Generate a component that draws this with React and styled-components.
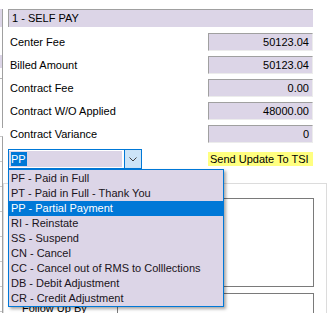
import React from 'react'
import styled, { createGlobalStyle } from 'styled-components'

const Global = createGlobalStyle`
  html, body { margin: 0; padding: 0; background: #fff; }
`

const lavender = '#dcd5e7'

const fields = [
  { label: 'Center Fee', value: '50123.04' },
  { label: 'Billed Amount', value: '50123.04' },
  { label: 'Contract Fee', value: '0.00' },
  { label: 'Contract W/O Applied', value: '48000.00' },
  { label: 'Contract Variance', value: '0' },
]

const options = [
  'PF - Paid in Full',
  'PT - Paid in Full - Thank You',
  'PP - Partial Payment',
  'RI - Reinstate',
  'SS - Suspend',
  'CN - Cancel',
  'CC - Cancel out of RMS to Colllections',
  'DB - Debit Adjustment',
  'CR - Credit Adjustment',
]

const Frame = styled.div`
  display: flex;
  width: 333px;
  height: 313px;
  overflow: hidden;
  background: #fff;
  color: #000;
  font: 11px "Liberation Sans", Arial, sans-serif;
`

const LeftEdge = styled.div`
  flex: none;
  width: 3px;
  display: flex;
  flex-direction: column;
`

const EdgeTop = styled.div`
  margin-top: 9px;
  height: 119px;
  border-right: 1px solid #a0a0a0;
  display: flex;
  flex-direction: column;
`

const EdgeSwatch = styled.div`
  height: ${p => p.$h}px;
  background: ${p => (p.$fill ? lavender : 'transparent')};
  border-bottom: ${p => (p.$line ? '1px solid #b4b4b4' : 'none')};
`

const EdgeBottom = styled.div`
  margin-top: 8px;
  flex: 1;
  border-top: 1px solid #c8c8c8;
  border-right: 1px solid #a0a0a0;
`

const EdgeCell = styled.div`
  height: 24px;
  border-bottom: 1px solid #c8c8c8;
`

const Content = styled.div`
  flex: 1;
  min-width: 0;
  display: flex;
  flex-direction: column;
`

const Main = styled.div`
  margin-left: 5px;
  width: 305px;
`

const Header = styled.div`
  margin-top: 9px;
  height: 18px;
  box-sizing: border-box;
  padding-left: 3px;
  line-height: 17px;
  background: ${lavender};
  border-top: 1px solid #a0a0a0;
  border-left: 1px solid #a0a0a0;
`

const Fields = styled.div`
  margin-top: 6px;
  display: grid;
  row-gap: 5px;
`

const Row = styled.div`
  display: flex;
  align-items: center;
  justify-content: space-between;
  height: 18px;
`

const Label = styled.span`
  padding-left: 2px;
`

const ValueBox = styled.div`
  width: 105px;
  height: 18px;
  box-sizing: border-box;
  padding-right: 3px;
  text-align: right;
  line-height: 16px;
  background: ${lavender};
  border-top: 1px solid #a0a0a0;
  border-left: 1px solid #a0a0a0;
  border-right: 1px solid #ececec;
  border-bottom: 1px solid #ececec;
`

const ComboRow = styled.div`
  margin-top: 6px;
  display: flex;
  align-items: center;
  justify-content: space-between;
`

const Combo = styled.div`
  position: relative;
  width: 134px;
  height: 20px;
  box-sizing: border-box;
  display: flex;
  border: 1px solid #0078d7;
  background: #fff;
`

const ComboField = styled.div`
  flex: 1;
  margin: 1px 2px 1px 0;
  padding-left: 2px;
  display: flex;
  align-items: center;
  background: ${lavender};
`

const Selected = styled.span`
  background: #0078d7;
  color: #fff;
  line-height: 14px;
  padding-right: 1px;
`

const ComboButton = styled.div`
  width: 16px;
  display: flex;
  align-items: center;
  justify-content: center;
  background: #cce4f7;
  border-left: 1px solid #0078d7;
`

const Tag = styled.span`
  width: 105px;
  box-sizing: border-box;
  padding-left: 2px;
  line-height: 14px;
  background: #ffff80;
`

const List = styled.ul`
  position: absolute;
  left: -1px;
  top: calc(100% + 1px);
  z-index: 5;
  width: 216px;
  margin: 0;
  padding: 1px 0 0;
  list-style: none;
  box-sizing: border-box;
  background: ${lavender};
  border: 1px solid #0078d7;
  box-shadow: 2px 2px 3px rgba(0, 0, 0, 0.35);
`

const Item = styled.li`
  height: 15px;
  line-height: 15px;
  padding-left: 2px;
  white-space: nowrap;
  color: ${p => (p.$active ? '#fff' : '#1a1320')};
  background: ${p => (p.$active ? '#0078d7' : 'transparent')};
`

const GroupBox = styled.div`
  flex: 1;
  margin-top: 14px;
  width: 324px;
  box-sizing: border-box;
  padding-top: 14px;
  border: 1px solid #dcdcdc;
  border-bottom: none;
`

const Memo = styled.div`
  margin-left: 113px;
  width: 197px;
  height: 89px;
  box-sizing: border-box;
  border: 1px solid #7a7a7a;
  background: #fff;
`

const FollowRow = styled.div`
  margin-top: 6px;
  display: flex;
`

const FollowLabel = styled.span`
  width: 113px;
  box-sizing: border-box;
  padding: 9px 0 0 18px;
  line-height: 13px;
`

const Input = styled.div`
  width: 197px;
  height: 22px;
  box-sizing: border-box;
  border: 1px solid #7a7a7a;
`

function Chevron() {
  return (
    <svg width="8" height="5" viewBox="0 0 8 5">
      <polyline points="0.5,0.5 4,4 7.5,0.5" fill="none" stroke="#404040" strokeWidth="1" />
    </svg>
  )
}

export default function App() {
  return (
    <>
      <Global />
      <Frame>
        <LeftEdge>
          <EdgeTop>
            <EdgeSwatch $h={18} $fill />
            <EdgeSwatch $h={28} />
            <EdgeSwatch $h={13} $fill />
            <EdgeSwatch $h={10} $line />
          </EdgeTop>
          <EdgeBottom>
            {Array.from({ length: 7 }).map((_, i) => (
              <EdgeCell key={i} />
            ))}
          </EdgeBottom>
        </LeftEdge>
        <Content>
          <Main>
            <Header>1 - SELF PAY</Header>
            <Fields>
              {fields.map(f => (
                <Row key={f.label}>
                  <Label>{f.label}</Label>
                  <ValueBox>{f.value}</ValueBox>
                </Row>
              ))}
            </Fields>
            <ComboRow>
              <Combo>
                <ComboField>
                  <Selected>PP</Selected>
                </ComboField>
                <ComboButton>
                  <Chevron />
                </ComboButton>
                <List>
                  {options.map(o => (
                    <Item key={o} $active={o.startsWith('PP')}>
                      {o}
                    </Item>
                  ))}
                </List>
              </Combo>
              <Tag>Send Update To TSI</Tag>
            </ComboRow>
          </Main>
          <GroupBox>
            <Memo />
            <FollowRow>
              <FollowLabel>Follow Up By</FollowLabel>
              <Input />
            </FollowRow>
          </GroupBox>
        </Content>
      </Frame>
    </>
  )
}
